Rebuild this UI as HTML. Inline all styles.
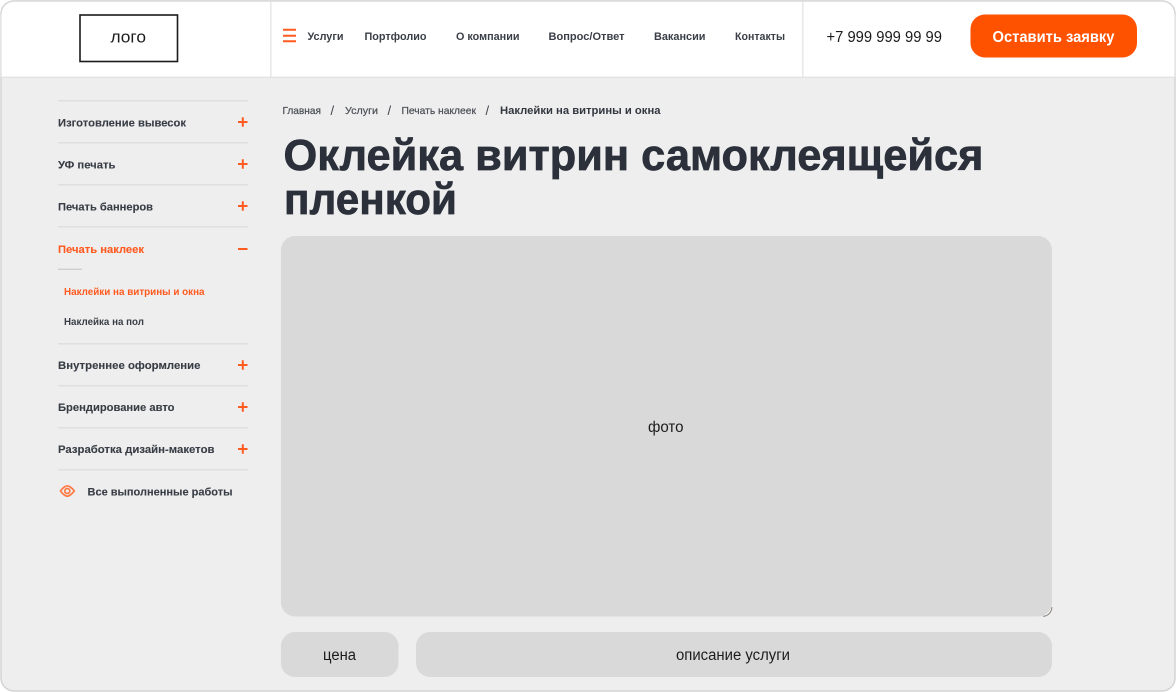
<!DOCTYPE html>
<html lang="ru">
<head>
<meta charset="utf-8">
<title>Оклейка витрин</title>
<style>
html,body{margin:0;padding:0;width:1176px;height:692px;overflow:hidden;background:#fff}
svg{display:block;position:absolute;left:0;top:0}
text{font-family:"Liberation Sans",sans-serif;white-space:pre;filter:blur(.3px)}
.n{font-size:11px;font-weight:700;fill:#3a3f47}
.m{font-size:11px;font-weight:700;fill:#383d45;stroke:#383d45;stroke-width:.1px}
.s{font-size:9.800px;font-weight:700;fill:#3a3f47}
.b{font-size:10.500px;fill:#4a4e55;stroke:#4a4e55;stroke-width:.2px}
.sl{font-size:13px;fill:#3a3f47}
.t{font-size:44px;font-weight:700;fill:#2b303a;stroke:#2b303a;stroke-width:.7px}
.r{font-size:15.500px;fill:#1c1c1c}
</style>
</head>
<body>
<svg width="1176" height="692" viewBox="0 0 1176 692" xmlns="http://www.w3.org/2000/svg">
  <rect x="0" y="0" width="1176" height="692" fill="#fff"/>
  <rect x="1" y="1" width="1174" height="690" rx="13" fill="#eeeeee" stroke="#d4d4d4" stroke-width="1.500"/>
  <path d="M1.500 77V14A12.500 12.500 0 0 1 14 1.500H1162A12.500 12.500 0 0 1 1174.500 14V77Z" fill="#fff"/>
  <path d="M1 14A13 13 0 0 1 14 1H1162A13 13 0 0 1 1175 14" fill="none" stroke="#d8d8d8" stroke-width="1.500"/>
  <path d="M1 14V77M1175 14V77" stroke="#e0e0e0" stroke-width="1.200"/>
  <path d="M1 77.300H1175" stroke="#e2e2e2" stroke-width="1.300"/>
  <path d="M270.800 2V77M802.800 2V77" stroke="#e4e4e4" stroke-width="1.300"/>

  <rect x="80" y="15" width="97.500" height="46.500" fill="#fff" stroke="#1b1b1b" stroke-width="1.600"/>
  <text x="110.500" y="42.500" font-size="17" fill="#1c1c1c" textLength="35.500" lengthAdjust="spacingAndGlyphs">лого</text>

  <path d="M283 29.700H296M283 35.700H296M283 41.200H296" stroke="#ff5a1f" stroke-width="2"/>
  <text class="n" x="307.500" y="40" textLength="36" lengthAdjust="spacingAndGlyphs">Услуги</text>
  <text class="n" x="364.500" y="40" textLength="62" lengthAdjust="spacingAndGlyphs">Портфолио</text>
  <text class="n" x="456" y="40" textLength="63.500" lengthAdjust="spacingAndGlyphs">О компании</text>
  <text class="n" x="548.500" y="40" textLength="76" lengthAdjust="spacingAndGlyphs">Вопрос/Ответ</text>
  <text class="n" x="654" y="40" textLength="51.500" lengthAdjust="spacingAndGlyphs">Вакансии</text>
  <text class="n" x="735" y="40" textLength="50" lengthAdjust="spacingAndGlyphs">Контакты</text>

  <text class="r" x="826.500" y="42" textLength="115.500" lengthAdjust="spacingAndGlyphs">+7 999 999 99 99</text>
  <rect x="970.500" y="14.500" width="166.500" height="43" rx="14.500" fill="#ff5200"/>
  <text x="992.500" y="42" font-size="15.500" font-weight="700" fill="#fff" textLength="122" lengthAdjust="spacingAndGlyphs">Оставить заявку</text>

  <g stroke="#dfdfdf" stroke-width="1.500">
    <path d="M58 100.800H248M58 142.800H248M58 184.800H248M58 226.800H248M58 343.800H248M58 385.800H248M58 427.800H248M58 469.800H248"/>
  </g>
  <path d="M58 269.300H82" stroke="#cfcfcf" stroke-width="1.300"/>

  <text class="m" x="58" y="126.500" textLength="128" lengthAdjust="spacingAndGlyphs">Изготовление вывесок</text>
  <text class="m" x="58" y="168.500" textLength="57.500" lengthAdjust="spacingAndGlyphs">УФ печать</text>
  <text class="m" x="58" y="210.500" textLength="95" lengthAdjust="spacingAndGlyphs">Печать баннеров</text>
  <text class="m" x="58" y="252.800" style="fill:#ff5a1f;stroke:#ff5a1f" textLength="86" lengthAdjust="spacingAndGlyphs">Печать наклеек</text>
  <text class="s" x="64" y="295.200" style="fill:#ff5a1f" textLength="140.500" lengthAdjust="spacingAndGlyphs">Наклейки на витрины и окна</text>
  <text class="s" x="64" y="325" textLength="80" lengthAdjust="spacingAndGlyphs">Наклейка на пол</text>
  <text class="m" x="58" y="369" textLength="142.500" lengthAdjust="spacingAndGlyphs">Внутреннее оформление</text>
  <text class="m" x="58" y="411" textLength="116.500" lengthAdjust="spacingAndGlyphs">Брендирование авто</text>
  <text class="m" x="58" y="453" textLength="156.500" lengthAdjust="spacingAndGlyphs">Разработка дизайн-макетов</text>
  <text class="m" x="87.500" y="495.500" textLength="145" lengthAdjust="spacingAndGlyphs">Все выполненные работы</text>

  <g stroke="#ff5a1f" stroke-width="2" fill="none">
    <path d="M238 122H247.500M242.800 117.300V126.800"/>
    <path d="M238 164H247.500M242.800 159.300V168.800"/>
    <path d="M238 206H247.500M242.800 201.300V210.800"/>
    <path d="M238 249H247.500"/>
    <path d="M238 365H247.500M242.800 360.300V369.800"/>
    <path d="M238 407H247.500M242.800 402.300V411.800"/>
    <path d="M238 449H247.500M242.800 444.300V453.800"/>
  </g>
  <g fill="none" stroke="#ff7a45" stroke-width="1.700">
    <path d="M60.500 491C63 487.300 66 485.800 67.300 485.800C68.600 485.800 71.600 487.300 74.300 491C71.600 494.700 68.600 496.200 67.300 496.200C66 496.200 63 494.700 60.500 491Z"/>
    <circle cx="67.300" cy="491" r="2.500"/>
  </g>

  <text class="b" x="282.500" y="114.200" textLength="38.500" lengthAdjust="spacingAndGlyphs">Главная</text>
  <text class="sl" x="330.500" y="114.800">/</text>
  <text class="b" x="345" y="114.200" textLength="33" lengthAdjust="spacingAndGlyphs">Услуги</text>
  <text class="sl" x="387.500" y="114.800">/</text>
  <text class="b" x="401.500" y="114.200" textLength="74.500" lengthAdjust="spacingAndGlyphs">Печать наклеек</text>
  <text class="sl" x="485.500" y="114.800">/</text>
  <text x="500" y="114.200" font-size="11" font-weight="700" fill="#33373f" textLength="160.500" lengthAdjust="spacingAndGlyphs">Наклейки на витрины и окна</text>

  <text class="t" x="283.500" y="170" textLength="700" lengthAdjust="spacingAndGlyphs">Оклейка витрин самоклеящейся</text>
  <text class="t" x="284" y="214" textLength="173" lengthAdjust="spacingAndGlyphs">пленкой</text>

  <path d="M1043 616.300A9 9 0 0 0 1051.800 607" fill="none" stroke="#8a857e" stroke-width="1"/>
  <rect x="281" y="236" width="771" height="380.500" rx="14" fill="#d9d9d9"/>
  <text x="648" y="432" font-size="15.500" fill="#1c1c1c" textLength="35.500" lengthAdjust="spacingAndGlyphs">фото</text>

  <rect x="281" y="632" width="117.500" height="45" rx="14" fill="#d9d9d9"/>
  <text x="323" y="660" font-size="15.500" fill="#1c1c1c" textLength="33" lengthAdjust="spacingAndGlyphs">цена</text>
  <rect x="416" y="632" width="636" height="45" rx="14" fill="#d9d9d9"/>
  <text x="676" y="660" font-size="15.500" fill="#1c1c1c" textLength="114" lengthAdjust="spacingAndGlyphs">описание услуги</text>
</svg>
</body>
</html>
